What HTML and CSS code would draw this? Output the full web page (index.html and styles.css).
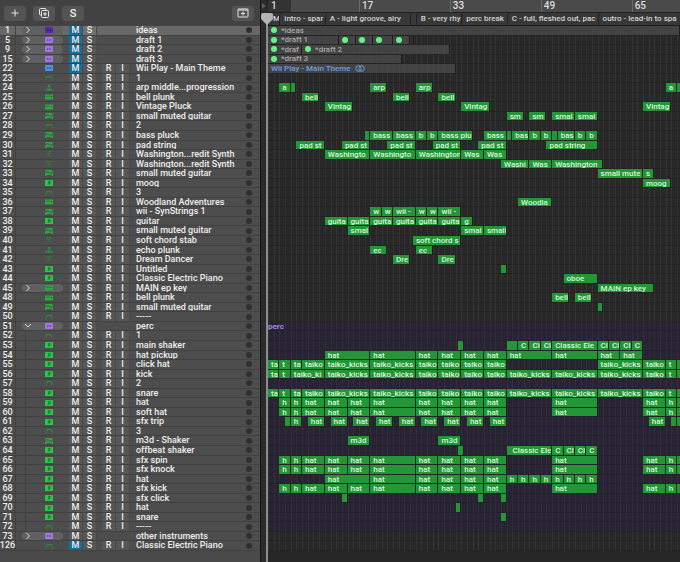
FILE: index.html
```
<!DOCTYPE html>
<html lang="en">
  <head>
    <meta charset="utf-8">
    <title>Tracks</title>
    <link rel="stylesheet" href="styles.css">
  </head>
  <body>
    <!-- Track icons -->
    <svg class="sprite" aria-hidden="true">
      <symbol id="folder" viewBox="0 0 8 6">
        <rect width="8" height="6" rx="1" fill="currentColor"/>
        <rect x="2" y="2" width="4" height="2" fill="#000" opacity=".3"/>
        <rect x="3" y="2.5" width="2" height="1" fill="currentColor"/>
      </symbol>
      <symbol id="note" viewBox="0 0 8 6">
        <rect width="8" height="6" rx=".6" fill="currentColor"/>
        <path d="M3.6 4.3V1.5l1.5-.3v2.6M3.6 4.3h-.8M5.1 3.8h-.8" fill="none" stroke="#1b5a28" stroke-width=".7"/>
      </symbol>
      <symbol id="flat" viewBox="0 0 8 6">
        <rect y=".5" width="8" height="5" fill="currentColor"/>
        <path d="M.5 2.2h4M5 2.5h2.5" stroke="#1d6b2c" stroke-width=".7"/>
      </symbol>
      <symbol id="keys" viewBox="0 0 8 6">
        <path d="M.5 0h7v2.6h-7zM0 3.2h8V6H6.500V5h-5v1H0z" fill="currentColor"/>
        <path d="M1 1.500h3M5 3.700h2" stroke="#1d6b2c" stroke-width=".6"/>
      </symbol>
      <symbol id="stack" viewBox="0 0 8 6">
        <path d="M3 0h2v2H3zM2 2.500h4v1H2zM.5 4h2v2h-2zM3 4h2v2H3zM5.500 4h2v2h-2z" fill="currentColor"/>
      </symbol>
      <symbol id="stand" viewBox="0 0 8 6">
        <path d="M.8.5h6.400M1.500.8L6 5.800M6.500.8L2 5.800M2.500 2.500h3" fill="none" stroke="currentColor" stroke-width=".8"/>
      </symbol>
      <symbol id="arc" viewBox="0 0 8 6">
        <path d="M1 5.500V2.500Q1 1.500 2 1.500h4q1 0 1 1v3M2 1.800l1 1M6 1.800l-1 1" fill="none" stroke="currentColor" stroke-width=".9"/>
      </symbol>
    </svg>

    <div class="daw">
      <section class="tracks">
        <header class="toolbar">
          <button class="tool" aria-label="Add track">
            <svg width="10" height="10" viewBox="0 0 10 10"><path d="M5 1.500v7M1.500 5h7"/></svg>
          </button>
          <button class="tool" aria-label="Duplicate track">
            <svg width="12" height="12" viewBox="0 0 12 12"><path d="M3 8H2.500Q1.500 8 1.500 7V2.500q0-1 1-1H7q1 0 1 1V3M4.500 3.500h5q1 0 1 1v5q0 1-1 1h-5q-1 0-1-1v-5q0-1 1-1zM7 5v4M5 7h4"/></svg>
          </button>
          <button class="tool">S</button>
          <button class="tool last" aria-label="Track header settings">
            <svg width="12" height="10" viewBox="0 0 12 10"><path d="M1.500 1h9q.5 0 .5.5v7q0 .5-.5.5h-9Q1 9 1 8.500v-7Q1 1 1.500 1zM1 2h10M6 3.500v4M4 5.500h4"/></svg>
          </button>
        </header>
        <div class="rows" id="trackList"></div>
      </section>

      <div class="divider"><svg width="5" height="6" viewBox="0 0 5 6"><path d="M1 0l4 3-4 3z"/></svg></div>

      <section class="timeline">
        <div class="ruler" id="ruler"></div>
        <div class="markers" id="markers"></div>
        <div class="rows lanes" id="lanes"></div>
        <div class="playhead"><svg width="12" height="12" viewBox="0 0 12 12"><path d="M2 0h8q2 0 2 2v4L6 12 0 6V2Q0 0 2 0z"/></svg></div>
      </section>
    </div>

    <script src="tracks.js"></script>
  </body>
</html>
```
FILE: styles.css
```
* {
  box-sizing: border-box;
}

body {
  margin: 0;
  background: #272727;
  color: #eee;
  font-family: Roboto, "Liberation Sans", sans-serif;
  font-size: 8px;
  font-weight: 500;
  line-height: 9px;
  overflow-x: hidden;
}

button {
  margin: 0;
  padding: 0;
  border: 0;
  background: none;
  color: inherit;
  font: inherit;
}

.sprite {
  display: none;
}

.daw {
  display: grid;
  grid-template-columns: 260px 6px minmax(0, 1fr);
  grid-template-rows: minmax(0, 1fr);
  height: 100vh;
}

/* Track headers */
.tracks {
  display: flex;
  flex-direction: column;
  padding-bottom: 11px;
  background: #4a4a4a;
}

.toolbar {
  display: flex;
  flex: none;
  align-items: center;
  gap: 7px;
  height: 26px;
  padding: 0 6px 0 4px;
  background: #424242;
}

.tool {
  display: flex;
  align-items: center;
  justify-content: center;
  width: 22px;
  height: 15px;
  border-radius: 3px;
  background: #545454;
  font-size: 11px;
}

.tool.last {
  margin-left: auto;
}

.tool svg {
  fill: none;
  stroke: #e4e4e4;
  stroke-width: 1;
}

.rows {
  flex: 1;
  min-height: 0;
  display: grid;
  grid-auto-rows: minmax(9px, 1fr);
}

.track {
  display: grid;
  grid-template-columns: 16px 6px 41px 6px 14px 14px 5px 14px 14px 6px minmax(0, 1fr) 22px;
  grid-template-rows: minmax(0, 1fr);
  align-items: center;
  min-height: 0;
  border-bottom: 1px solid #414141;
  background: #4d4d4d;
  overflow: hidden;
}

.track.selected {
  background: #686868;
}

.track > * {
  height: 100%;
}

.number {
  display: flex;
  justify-content: center;
  border-right: 1px solid #414141;
  font-size: 9px;
}

.head {
  grid-column: 3;
  display: grid;
  grid-template-columns: 12px 8px;
  align-items: center;
  gap: 11px;
}

.folder .head {
  border-radius: 5px;
  background: #606060;
}

.child .head {
  margin-left: 3px;
  border-left: 1px solid #424242;
  grid-template-columns: 8px 8px;
}

.arrow {
  display: flex;
  align-items: center;
  justify-content: center;
  height: 8px;
}

.arrow svg {
  fill: none;
  stroke: #ddd;
}

.icon {
  display: block;
  grid-column: 2;
  width: 8px;
  height: 6px;
}

.note {
  color: #2fc24b;
}

.flat,
.keys {
  color: #2ea844;
}

.stack {
  color: #2c8f3e;
}

.stand {
  color: #347a40;
}

.arc {
  color: #2d8a3d;
}

.purple {
  color: #a276e6;
}

.violet {
  color: #5a25b4;
}

.blue {
  color: #4b92e6;
}

.switch {
  border-right: 1px solid #4b4b4b;
  background: #565656;
  font-size: 9px;
  line-height: 9px;
}

.selected .switch {
  background: #707070;
}

.switch.mute {
  grid-column: 5;
}

.switch.solo {
  grid-column: 6;
}

.switch.record {
  grid-column: 8;
}

.switch.input {
  grid-column: 9;
}

.track .switch.on {
  background: #176c95;
}

.name {
  grid-column: 11;
  font-size: 9px;
  white-space: nowrap;
}

.track .led {
  grid-column: 12;
  justify-self: center;
  width: 6px;
  height: 6px;
  border-radius: 50%;
  background: #303030;
}

.divider {
  padding-top: 3px;
  border-left: 1px solid #161616;
  background: #2b2b2b;
}

.divider svg {
  display: block;
  fill: #5c5c5c;
}

/* Timeline, one grid column for each half bar */
.timeline {
  position: relative;
  display: flex;
  flex-direction: column;
  min-width: 0;
  padding: 0 0 11px 2px;
}

.ruler,
.markers,
.lane {
  display: grid;
  grid-template-columns: repeat(145, minmax(0, 1fr));
  min-width: 0;
}

.ruler {
  flex: none;
  height: 13px;
  border-bottom: 1px solid #222;
  background: #4a4a4a;
}

.bar {
  padding-left: 2px;
  border-left: 1px solid #6a6a6a;
  color: #ddd;
  font-size: 10px;
  line-height: 11px;
}

.bar:first-child {
  border-color: #333;
  background: #333;
}

.markers {
  flex: none;
  height: 13px;
  border-bottom: 1px solid #1c1c1c;
  background: #343434;
}

.marker {
  padding-left: 4px;
  border-left: 1px solid #202020;
  border-top-left-radius: 4px;
  background: #383838;
  color: #d4d4d4;
  line-height: 12px;
  white-space: nowrap;
  overflow: hidden;
}

.lanes {
  background: repeating-linear-gradient(90deg, #343434 0 1px, #282828 1px calc(100% / 72.5));
}

.lane {
  grid-template-rows: minmax(0, 1fr);
  min-height: 0;
  border-bottom: 1px solid rgba(24, 24, 24, 0.3);
}

.lane.inside {
  background: rgba(42, 30, 78, 0.3);
}

.region {
  grid-row: 1;
  padding-left: 3px;
  border-right: 1px solid #102513;
  background: #239638;
  color: #daf5dc;
  white-space: nowrap;
  overflow: hidden;
}

.region.group,
.region.audio {
  display: flex;
  align-items: center;
  gap: 4px;
  border-color: #1c1c1c;
  background: rgba(74, 74, 74, 0.8);
  color: #a8a8a8;
}

.region.audio {
  color: #6c9fe0;
}

.region.audio svg {
  flex: none;
  fill: none;
  stroke: #6c9fe0;
}

.dot {
  flex: none;
  width: 6px;
  height: 6px;
  border-radius: 50%;
  background: #62f585;
}

.stack-name {
  grid-column: 1 / 20;
  color: #a684e4;
  font-weight: 700;
}

.playhead {
  position: absolute;
  top: 13px;
  bottom: 0;
  left: 0;
  width: 2px;
  background: #8c8c8c;
}

.playhead svg {
  position: absolute;
  left: -5px;
  fill: #b4b4b4;
}
```
FILE: tracks.js
```
// Regions are "start-end label", counted in half bars from bar 1
const intro = "0-4 ta,4-8 t,8-12 ta,12-20 taiko";
const kicks = "20-36 taiko_kicks,36-52 taiko_kicks,52-60 taiko,60-68 taiko,68-76 taiko,76-84 taiko";
const ending = "116-132 taiko_kicks,132-140 taiko,140-144 t,144-146";
const middle = "84-100 taiko_kicks,100-116 taiko_kicks";
const hats = "4-8 h,8-12 h,12-20 hat,20-28 hat,28-36 hat,36-52 hat,52-60 hat,60-68 hat,68-76 hat,76-84 hat,100-116 hat,132-140 hat,140-144 h,144-146";

// number, name, icon, regions, options
const tracks = [
  [1, "ideas", "folder violet", "0-145 *ideas", "folder mute selected"],
  [5, "draft 1", "folder purple", "0-25 *draft 1,25-31,31-37,37-44,44-50", "folder mute"],
  [9, "draft 2", "folder purple", "0-12 *draf,12-64 *draft 2", "folder mute"],
  [15, "draft 3", "folder purple", "0-47 *draft 3", "folder mute"],
  [22, "Wii Play - Main Theme", "folder blue", "0-66 Wii Play - Main Theme", "audio mute"],
  [23, "1", "arc", ""],
  [24, "arp middle...progression", "stack", "4-8 a,8-10,36-42 arp,52-58 arp,140-144 a,144-146"],
  [25, "bell plunk", "flat", "12-18 bell,44-50 bell,60-66 bell"],
  [26, "Vintage Pluck", "flat", "20-30 Vintag,68-78 Vintag,132-142 Vintag"],
  [27, "small muted guitar", "keys", "84-90 sm,92-98 sm,100-108 smal,108-116 smal"],
  [28, "2", "arc", ""],
  [29, "bass pluck", "keys", "34-36,36-44 bass,44-52 bass,52-56 b,56-60 b,60-72 bass plu,76-84 bass,84-86,86-92 bas,92-96 b,96-100 b,100-102,102-108 bas,108-112 b,112-116 b"],
  [30, "pad string", "keys", "10-20 pad st,26-36 pad st,42-52 pad st,58-68 pad st,74-84 pad st,98-116 pad string"],
  [31, "Washington...redit Synth", "stand", "20-36 Washingto,36-52 Washingto,52-68 Washington,68-76 Was,76-84 Was"],
  [32, "Washington...redit Synth", "stand", "82-92 Washi,92-100 Was,100-118 Washington"],
  [33, "small muted guitar", "keys", "116-132 small mute,132-136 s"],
  [34, "moog", "note", "132-142 moog"],
  [35, "3", "arc", ""],
  [36, "Woodland Adventures", "flat", "88-100 Woodla"],
  [37, "wii - SynStrings 1", "keys", "36-40 w,40-44 w,44-52 wii -,52-56 w,56-60 w,60-68 wii -"],
  [38, "guitar", "note", "20-28 guita,28-36 guita,36-44 guita,44-52 guita,52-60 guita,60-68 guita,68-72 g"],
  [39, "small muted guitar", "keys", "28-36 smal,68-76 smal,76-84 small"],
  [40, "soft chord stab", "stand", "51-68 soft chord s"],
  [41, "echo plunk", "stack", "36-42 ec,52-58 ec"],
  [42, "Dream Dancer", "stand", "44-50 Dre,60-66 Dre"],
  [43, "Untitled", "note", "82-84"],
  [44, "Classic Electric Piano", "note", "104-116 oboe"],
  [45, "MAIN ep key", "flat", "116-136 MAIN ep key", "folder switches"],
  [48, "bell plunk", "flat", "100-106 bell,108-114 bell"],
  [49, "small muted guitar", "keys", "116-118"],
  [50, "-----", "arc", ""],
  [51, "perc", "folder purple", "", "folder open"],
  [52, "1", "arc", "", "child"],
  [53, "main shaker", "note", "67-69,84-85,85-88,88-92 C,92-96 Cl,96-100 Cl,100-116 Classic Ele,116-120 Cl,120-124 Cl,124-128 Cl,128-132 C", "child"],
  [54, "hat pickup", "note", "20-36 hat,36-52 hat,52-60 hat,60-68 hat,68-76 hat,76-84 hat,84-100 hat,100-116 hat,116-124 hat,124-132 hat", "child"],
  [55, "click hat", "note", [intro, kicks, ending].join(), "child"],
  [56, "kick", "note", ["0-4 ta,4-8 t,8-20 taiko_ki", kicks, middle, ending].join(), "child"],
  [57, "2", "arc", "", "child"],
  [58, "snare", "note", [intro, kicks, middle, ending].join(), "child"],
  [59, "hat", "note", hats, "child"],
  [60, "soft hat", "note", hats, "child"],
  [61, "sfx trip", "note", "6-8,8-12 h,14-20 hat,22-28 hat,30-36 hat,38-44 hat,46-52 hat,54-60 hat,62-68 hat,70-76 hat,78-84 hat,134-140 hat,142-144,144-146", "child"],
  [62, "3", "arc", "", "child"],
  [63, "m3d - Shaker", "keys", "28-36 m3d,60-68 m3d", "child"],
  [64, "offbeat shaker", "note", "67-69,84-85,85-100 Classic Ele,100-104 C,104-108 Cl,108-112 Cl,112-116 C", "child"],
  [65, "sfx spin", "note", hats, "child"],
  [66, "sfx knock", "note", hats, "child"],
  [67, "hat", "note", "20-36 hat,36-52 hat,52-60 hat,60-68 hat,68-76 hat,76-84 hat,84-88 h,88-92 h,92-96 h,96-100 h,100-104 h,104-108 h,108-112 h,112-116 h", "child"],
  [68, "sfx kick", "note", hats, "child"],
  [69, "sfx click", "note", "26-28,74-76,82-84", "child"],
  [70, "hat", "note", "66-68", "child"],
  [71, "snare", "note", "82-84", "child"],
  [72, "-----", "arc", "", "child"],
  [73, "other instruments", "folder purple", "", "folder"],
  [126, "Classic Electric Piano", "arc", "", "mute"],
];

const markers = "0-4 M,4-20 intro - spar,20-50 A - light groove, airy,50-52,52-68 B - very rhy,68-84 perc break,84-116 C - full, fleshed out, pac,116-144 outro - lead-in to spa";

// Split only at commas that start a new range
function parse(list) {
  if (!list) return [];
  return list.split(/,(?=\d)/).map((item) => {
    const [, start, end, label] = item.match(/^(\d+)-(\d+) ?(.*)$/);
    return { start: +start + 1, end: Math.min(+end, 145) + 1, label };
  });
}

function place(item, className, content) {
  return `<div class="${className}" style="grid-column: ${item.start} / ${item.end}">${content}</div>`;
}

function trackRow([number, name, icon, , options = ""]) {
  const has = (word) => options.split(" ").includes(word);
  const chevron = has("open") ? "M1 2l3 3 3-3" : "M2.500 1l3 3-3 3";
  const arrow = has("folder")
    ? `<button class="arrow" aria-label="Toggle ${name}"><svg width="8" height="8" viewBox="0 0 8 8"><path d="${chevron}"/></svg></button>`
    : "";
  const inputs = !has("folder") || has("switches")
    ? `<button class="switch record">R</button><button class="switch input">I</button>`
    : "";
  return `<div class="track ${options.replace("mute", "")}">
    <span class="number">${number}</span>
    <div class="head">${arrow}<svg class="icon ${icon.split(" ").pop()}"><use href="#${icon.split(" ")[0]}"/></svg></div>
    <button class="switch mute ${has("mute") ? "on" : ""}">M</button>
    <button class="switch solo">S</button>
    ${inputs}
    <span class="name">${name}</span>
    <span class="led"></span>
  </div>`;
}

function laneRow([number, name, , regions, options = ""]) {
  const inside = options === "child" || number === 51;
  let html = parse(regions).map((item) => {
    if (number < 20) return place(item, "region group", `<span class="dot"></span>${item.label}`);
    if (options.includes("audio")) {
      return place(item, "region audio", `${item.label}<svg width="10" height="7" viewBox="0 0 10 7"><circle cx="3.500" cy="3.500" r="2.800"/><circle cx="6.500" cy="3.500" r="2.800"/></svg>`);
    }
    return place(item, "region", item.label);
  }).join("");
  if (number === 51) html = `<span class="stack-name">${name}</span>`;
  return `<div class="lane ${inside ? "inside" : ""}">${html}</div>`;
}

document.getElementById("trackList").innerHTML = tracks.map(trackRow).join("");
document.getElementById("lanes").innerHTML = tracks.map(laneRow).join("");
document.getElementById("markers").innerHTML = parse(markers).map((m) => place(m, "marker", m.label)).join("");
document.getElementById("ruler").innerHTML = [1, 17, 33, 49, 65].map((bar) => {
  const start = (bar - 1) * 2 + 1;
  return place({ start, end: start + 8 }, "bar", bar);
}).join("");
```
